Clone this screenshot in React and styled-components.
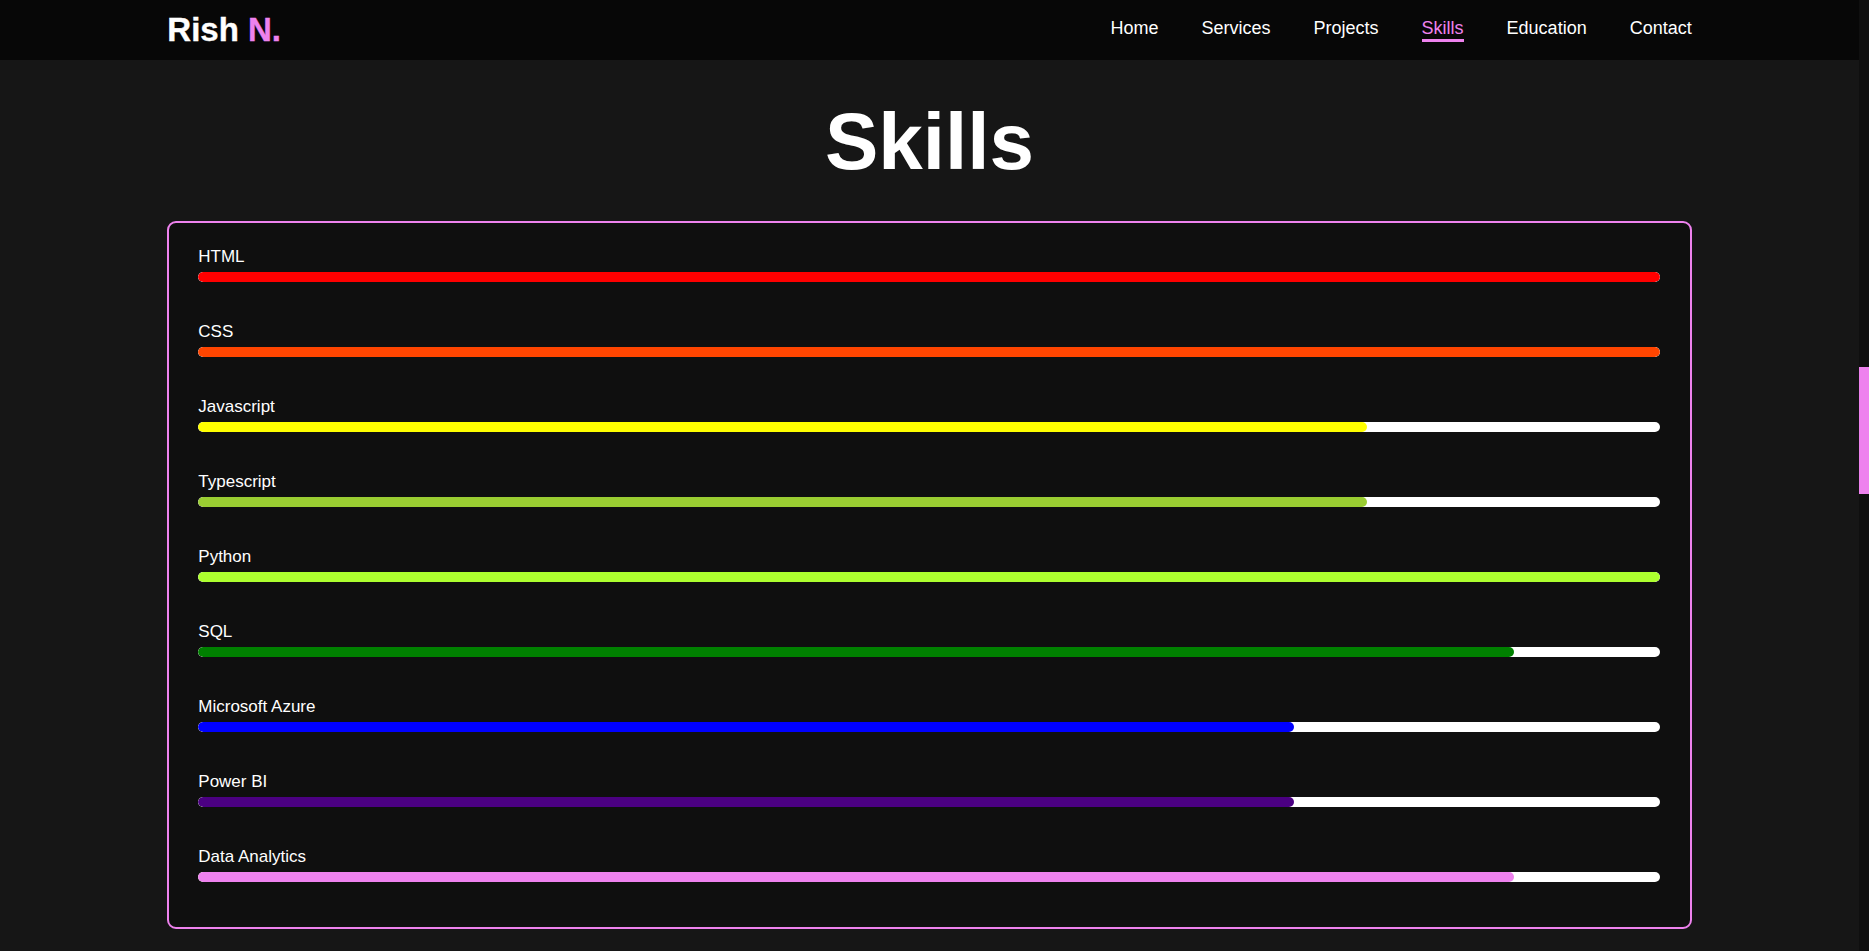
import React, { useLayoutEffect, useRef, useState } from "react";
import styled, { createGlobalStyle } from "styled-components";

const GlobalStyle = createGlobalStyle`
  html, body {
    margin: 0;
    padding: 0;
    height: 100%;
    overflow: hidden;
    background: #161616;
  }
  #root { height: 100%; }
  * { box-sizing: border-box; }
`;

const Frame = styled.div`
  display: flex;
  height: 100vh;
  background: #161616;
`;

const Page = styled.div`
  position: relative;
  flex: 1;
  min-width: 0;
  overflow-y: scroll;
  scrollbar-width: none;
  font-family: "Liberation Sans", Arial, sans-serif;
  color: #fff;

  &::-webkit-scrollbar { display: none; }
`;

// the page's own scrollbar, drawn next to the scrolling area
const Rail = styled.div`
  flex: 0 0 10px;
  background: #0f0f0f;
`;

const Thumb = styled.div`
  width: 100%;
  background: violet;
`;

const Header = styled.header`
  position: sticky;
  top: 0;
  z-index: 10;
  height: 60px;
  padding: 0 9%;
  background: #070707;
  display: flex;
  align-items: center;
  justify-content: space-between;
`;

const Logo = styled.a`
  font-size: 33px;
  font-weight: 700;
  color: #fff;
  text-decoration: none;
  -webkit-text-stroke: 0.4px #fff;

  span {
    color: violet;
    -webkit-text-stroke: 0.4px violet;
  }
`;

const Nav = styled.nav`
  display: flex;
  align-items: center;
  gap: 43px;
`;

const NavLink = styled.a`
  font-size: 18px;
  color: ${props => props.$active ? "violet" : "#fff"};
  text-decoration: none;
  border-bottom: 3px solid ${props => props.$active ? "violet" : "transparent"};
`;

// the rest of the one-page site, kept empty so the page scrolls like the original
const Section = styled.section`
  height: ${props => props.$height}px;
`;

const SkillsSection = styled.section`
  padding: 36px 9% 56px;
`;

const Title = styled.h2`
  margin: 0 0 33px;
  text-align: center;
  font-size: 80px;
  font-weight: 700;
  color: #fff;
`;

const Card = styled.div`
  display: flex;
  flex-direction: column;
  gap: 40px;
  padding: 24px 30px 45px 29px;
  background: #0f0f0f;
  border: 2px solid violet;
  border-radius: 9px;
`;

const Skill = styled.div`
  display: flex;
  flex-direction: column;
  gap: 6px;
`;

const Label = styled.span`
  font-size: 17px;
  line-height: 19px;
  color: #fff;
`;

const Track = styled.div`
  height: 10px;
  background: #fff;
  border-radius: 5px;
  overflow: hidden;
`;

const Fill = styled.div`
  height: 100%;
  background: ${props => props.$color};
  border-radius: 5px;
`;

const skills = [
  { name: "HTML", value: 100, color: "#ff0000" },
  { name: "CSS", value: 100, color: "#ff4500" },
  { name: "Javascript", value: 80, color: "#ffff00" },
  { name: "Typescript", value: 80, color: "#9acd32" },
  { name: "Python", value: 100, color: "#adff2f" },
  { name: "SQL", value: 90, color: "#008000" },
  { name: "Microsoft Azure", value: 75, color: "#0000ff" },
  { name: "Power BI", value: 75, color: "#4b0082" },
  { name: "Data Analytics", value: 90, color: "#ee82ee" },
];

const links = ["Home", "Services", "Projects", "Skills", "Education", "Contact"];

export default function App() {
  const pageRef = useRef(null);
  const skillsRef = useRef(null);
  const [thumb, setThumb] = useState({ top: 0, height: 0 });

  const measure = () => {
    let el = pageRef.current;
    if (!el) return;
    let view = el.clientHeight;
    setThumb({
      top: el.scrollTop / el.scrollHeight * view,
      height: view / el.scrollHeight * view
    });
  };

  useLayoutEffect(() => {
    if (pageRef.current && skillsRef.current) {
      pageRef.current.scrollTop = skillsRef.current.offsetTop - 60;
    }
    measure();
  }, []);

  return (
    <>
      <GlobalStyle />
      <Frame>
        <Page ref={pageRef} onScroll={measure}>
          <Header>
            <Logo href="#home">Rish <span>N.</span></Logo>
            <Nav>
              {links.map(l => (
                <NavLink key={l} href={"#" + l.toLowerCase()} $active={l === "Skills"}>{l}</NavLink>
              ))}
            </Nav>
          </Header>

          <Section id="home" $height={916} />
          <Section id="services" $height={916} />
          <Section id="projects" $height={916} />

          <SkillsSection id="skills" ref={skillsRef}>
            <Title>Skills</Title>
            <Card>
              {skills.map(s => (
                <Skill key={s.name}>
                  <Label>{s.name}</Label>
                  <Track>
                    <Fill $color={s.color} style={{ width: s.value + "%" }} />
                  </Track>
                </Skill>
              ))}
            </Card>
          </SkillsSection>

          <Section id="education" $height={1693} />
          <Section id="contact" $height={1692} />
        </Page>
        <Rail>
          <Thumb style={{ marginTop: thumb.top, height: thumb.height }} />
        </Rail>
      </Frame>
    </>
  );
}
